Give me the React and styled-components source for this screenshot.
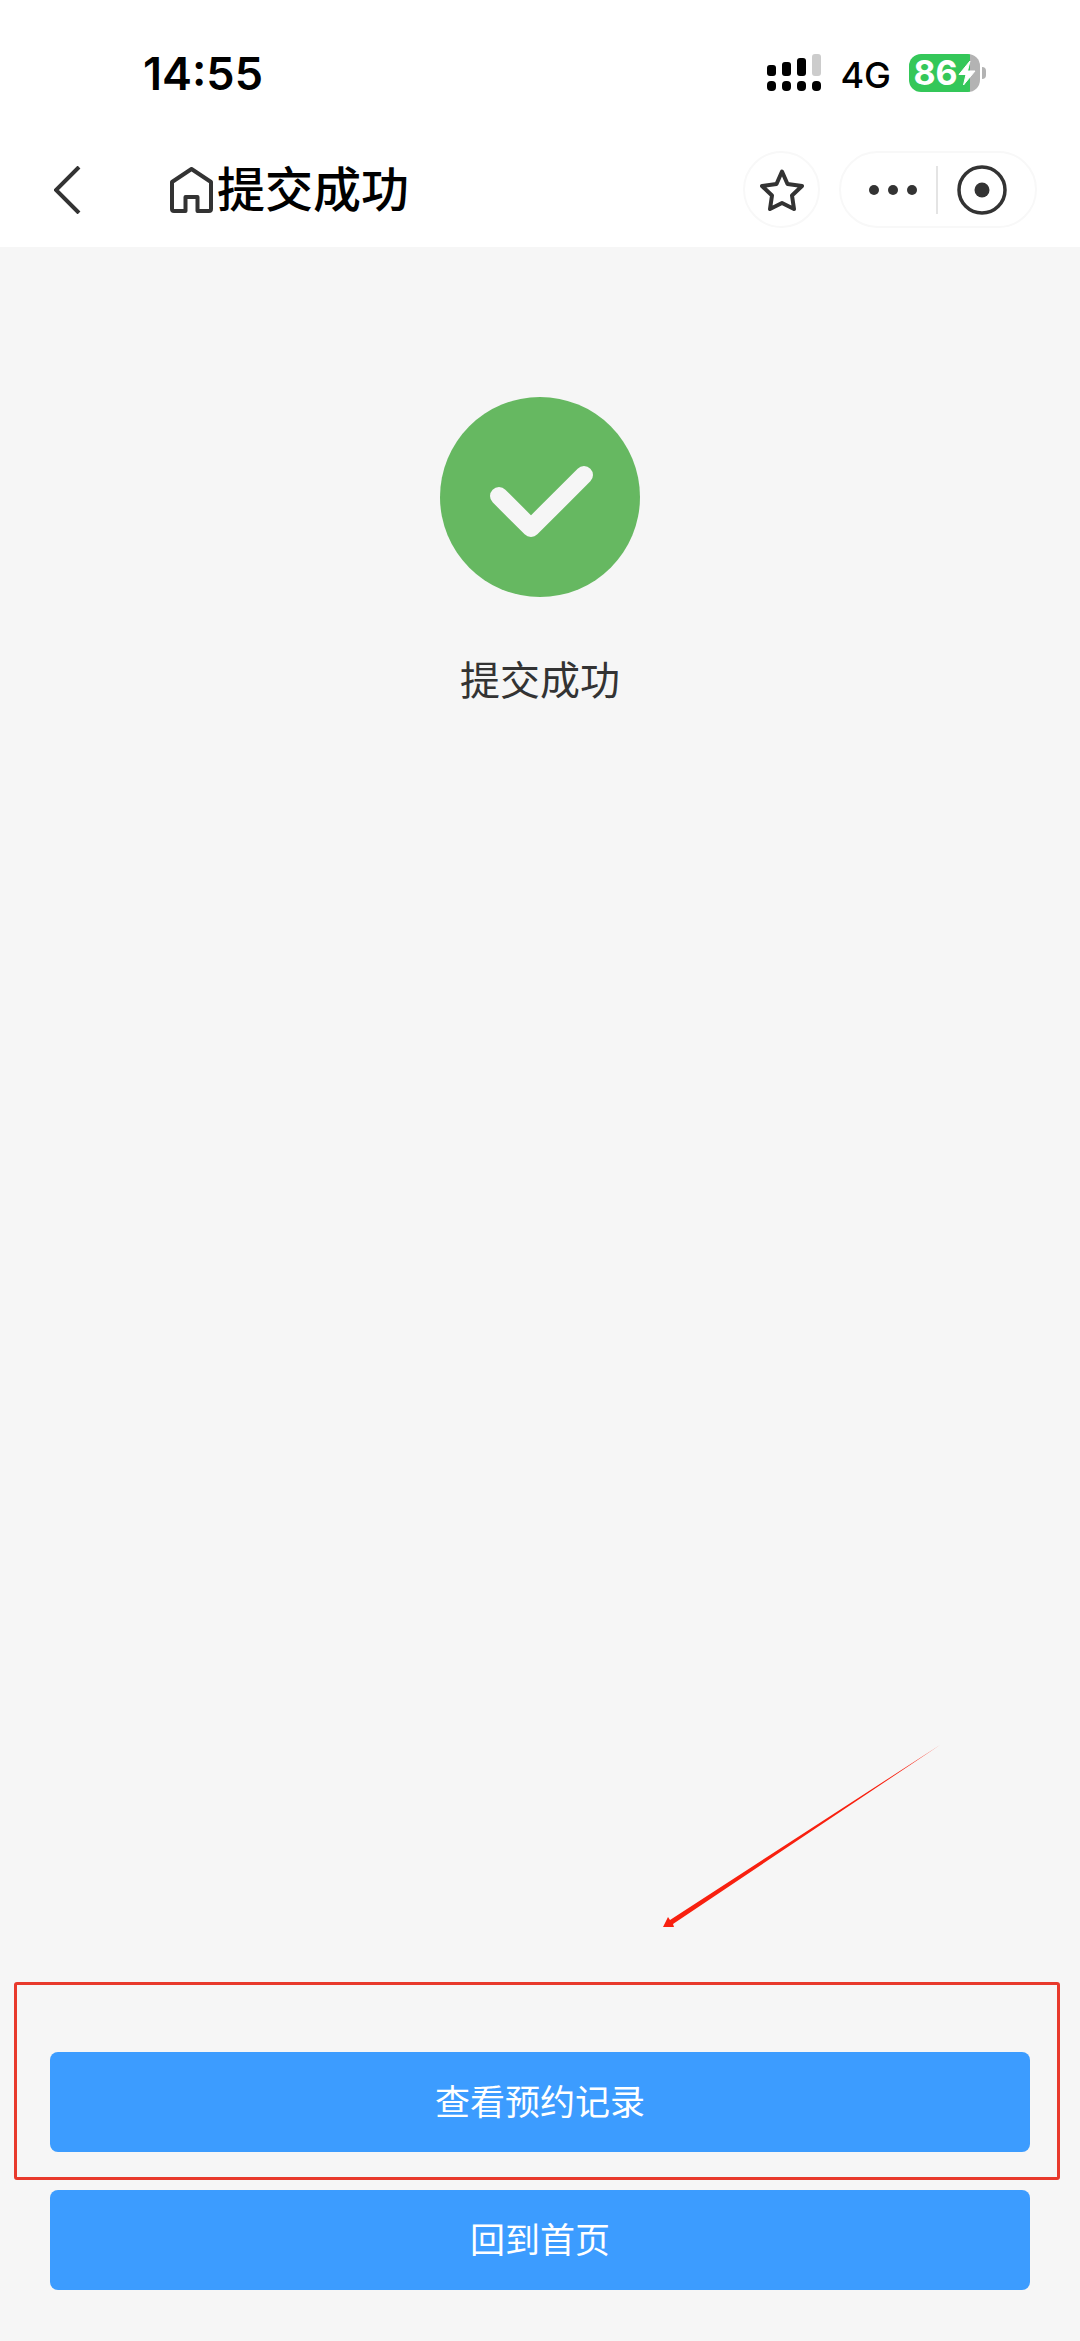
import styled, { createGlobalStyle } from "styled-components";

const GlobalStyle = createGlobalStyle`
  * {
    box-sizing: border-box;
  }

  body {
    margin: 0;
    background: #f6f6f6;
    font-family: Inter, "Noto Sans CJK SC", sans-serif;
  }

  button {
    padding: 0;
    border: none;
    background: none;
    color: inherit;
    font: inherit;
    cursor: pointer;
  }

  svg {
    display: block;
  }
`;

const Page = styled.div`
  display: flex;
  flex-direction: column;
  min-height: 100vh;
`;

const StatusBar = styled.div`
  display: flex;
  align-items: center;
  justify-content: space-between;
  height: 132px;
  padding: 16px 94px 0 143px;
  background: #ffffff;
  color: #000000;
`;

const Time = styled.time`
  font-size: 45px;
  font-weight: 600;
  line-height: 48px;
`;

const StatusIcons = styled.div`
  display: flex;
  align-items: center;
  gap: 18px;
  padding-bottom: 2px;
`;

const Network = styled.span`
  font-size: 36px;
  font-weight: 500;
  line-height: 40px;
  padding-top: 4px;
`;

const Battery = styled.div`
  display: flex;
  align-items: center;
  gap: 2px;
`;

const BatteryBody = styled.div`
  display: flex;
  align-items: center;
  justify-content: center;
  width: 71px;
  height: 38px;
  border-radius: 12px;
  background: linear-gradient(to right, #34c759 86%, #b3b3b3 86%);
  color: #ffffff;
  font-size: 34px;
  font-weight: 700;
  line-height: 38px;
`;

const BatteryTip = styled.div`
  width: 4px;
  height: 12px;
  border-radius: 0 6px 6px 0;
  background: #b3b3b3;
`;

const NavBar = styled.header`
  display: flex;
  align-items: center;
  height: 115px;
  padding: 0 43px 0 54px;
  background: #ffffff;
  color: #333333;
`;

const TitleGroup = styled.div`
  display: flex;
  align-items: center;
  gap: 4px;
  margin-left: 89px;
`;

const Title = styled.h1`
  margin: 0;
  color: #000000;
  font-size: 48px;
  font-weight: 500;
  line-height: 56px;
`;

const NavActions = styled.div`
  display: flex;
  gap: 19px;
  margin-left: auto;
`;

const RoundButton = styled.button`
  display: grid;
  place-items: center;
  width: 77px;
  height: 77px;
  border: 2px solid #f8f8f8;
  border-radius: 50%;
`;

const Capsule = styled.div`
  display: flex;
  align-items: center;
  height: 77px;
  padding: 0 28px;
  border: 2px solid #f8f8f8;
  border-radius: 39px;
`;

const Divider = styled.span`
  width: 2px;
  height: 48px;
  margin: 0 19px;
  background: #e4e4e4;
`;

const Result = styled.main`
  display: flex;
  flex: 1;
  flex-direction: column;
  align-items: center;
  gap: 56px;
  padding-top: 150px;
`;

const Message = styled.p`
  margin: 0;
  color: #333333;
  font-size: 40px;
  line-height: 56px;
`;

const Actions = styled.footer`
  display: grid;
  gap: 38px;
  padding: 0 50px 51px;
`;

const ActionItem = styled.div`
  position: relative;
`;

const ActionButton = styled.button`
  width: 100%;
  height: 100px;
  border-radius: 8px;
  background: #3c9cff;
  color: #ffffff;
  font-size: 35px;
  line-height: 48px;
`;

// Hand-drawn markers that sit over the page
const Highlight = styled.div`
  position: absolute;
  inset: -70px -30px -28px -36px;
  border: 3px solid #e8392c;
  border-radius: 3px;
  pointer-events: none;
`;

const Pointer = styled.svg`
  position: absolute;
  right: 90px;
  bottom: calc(100% + 123px);
  pointer-events: none;
`;

const SignalIcon = () => (
  <svg width="55" height="38" viewBox="0 0 55 38" aria-hidden="true">
    <rect x="0" y="11" width="9" height="11" rx="3" />
    <rect x="15" y="8" width="9" height="14" rx="3" />
    <rect x="30" y="4" width="9" height="18" rx="3" />
    <rect x="45" y="0" width="9" height="22" rx="3" fill="#cccccc" />
    {[0, 15, 30, 45].map((x) => (
      <rect key={x} x={x} y="27" width="9" height="10" rx="4" />
    ))}
  </svg>
);

const BoltIcon = () => (
  <svg width="18" height="26" viewBox="0 0 18 26" aria-hidden="true">
    <path
      d="M12 1 1 14.5h7L5.5 25 17 11H9.5Z"
      fill="#ffffff"
      stroke="#ffffff"
      strokeLinejoin="round"
    />
  </svg>
);

const BackIcon = () => (
  <svg width="27" height="48" viewBox="0 0 27 48" fill="none">
    <path d="M25 1 2 24l23 23" stroke="currentColor" strokeWidth="4" />
  </svg>
);

const HomeIcon = () => (
  <svg width="43" height="46" viewBox="0 0 43 46" fill="none">
    <path
      d="M4 44h11.500V30h12v14H39a2 2 0 0 0 2-2V15L21.500 2 2 15v27a2 2 0 0 0 2 2Z"
      stroke="currentColor"
      strokeWidth="4"
      strokeLinejoin="round"
    />
  </svg>
);

const StarIcon = () => (
  <svg width="44" height="42" viewBox="0 0 44 42" fill="none">
    <path
      d="m22 2.500 5.500 12.500 14.500 2-10 9.500L34 40l-12-6-12 6 2-13.500L2 17l14.500-2Z"
      stroke="currentColor"
      strokeWidth="4"
      strokeLinejoin="round"
    />
  </svg>
);

const MoreIcon = () => (
  <svg width="48" height="10" viewBox="0 0 48 10" fill="currentColor">
    <circle cx="5" cy="5" r="5" />
    <circle cx="24" cy="5" r="5" />
    <circle cx="43" cy="5" r="5" />
  </svg>
);

const CloseIcon = () => (
  <svg width="50" height="50" viewBox="0 0 50 50" fill="none">
    <circle cx="25" cy="25" r="23" stroke="currentColor" strokeWidth="3.500" />
    <circle cx="25" cy="25" r="7.500" fill="currentColor" />
  </svg>
);

const SuccessIcon = () => (
  <svg width="200" height="200" viewBox="0 0 200 200" fill="none">
    <circle cx="100" cy="100" r="100" fill="#66b861" />
    <path
      d="m59 99 32 32 53-53"
      stroke="#f6f6f6"
      strokeWidth="18"
      strokeLinecap="round"
      strokeLinejoin="round"
    />
  </svg>
);

const App = () => (
  <Page>
    <GlobalStyle />
    <StatusBar>
      <Time>14:55</Time>
      <StatusIcons>
        <SignalIcon />
        <Network>4G</Network>
        <Battery>
          <BatteryBody>
            86
            <BoltIcon />
          </BatteryBody>
          <BatteryTip />
        </Battery>
      </StatusIcons>
    </StatusBar>
    <NavBar>
      <button type="button" aria-label="返回">
        <BackIcon />
      </button>
      <TitleGroup>
        <button type="button" aria-label="首页">
          <HomeIcon />
        </button>
        <Title>提交成功</Title>
      </TitleGroup>
      <NavActions>
        <RoundButton type="button" aria-label="收藏">
          <StarIcon />
        </RoundButton>
        <Capsule>
          <button type="button" aria-label="更多">
            <MoreIcon />
          </button>
          <Divider />
          <button type="button" aria-label="关闭">
            <CloseIcon />
          </button>
        </Capsule>
      </NavActions>
    </NavBar>
    <Result>
      <SuccessIcon />
      <Message>提交成功</Message>
    </Result>
    <Actions>
      <ActionItem>
        <ActionButton type="button">查看预约记录</ActionButton>
        <Highlight />
        <Pointer width="277" height="184" viewBox="0 0 277 184">
          <path d="M0 182 5 172 7 175 277 0 10 179 11 182Z" fill="#f8200f" />
        </Pointer>
      </ActionItem>
      <ActionItem>
        <ActionButton type="button">回到首页</ActionButton>
      </ActionItem>
    </Actions>
  </Page>
);

export default App;
